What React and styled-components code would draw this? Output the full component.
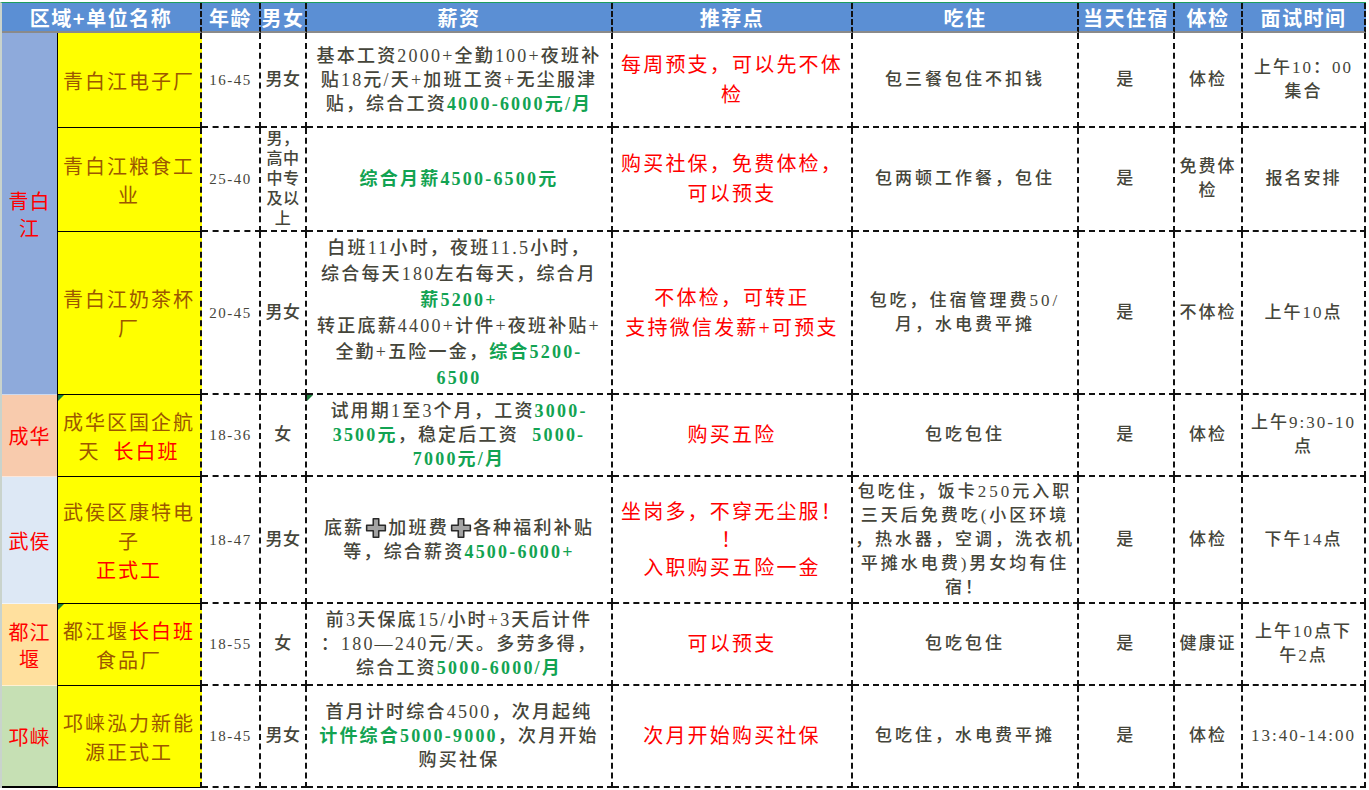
import React from 'react'
import styled, { createGlobalStyle } from 'styled-components'

const GlobalStyle = createGlobalStyle`
  html, body {
    margin: 0;
    padding: 0;
    background: #ffffff;
  }
  * {
    box-sizing: border-box;
  }
`

const serif = `"Liberation Serif", "Noto Sans CJK SC", serif`
const sans = `"Noto Sans CJK SC", "Noto Sans", sans-serif`
const ink = '#45453a'
const dash = '2px dashed #111'

const Sheet = styled.div`
  width: 1369px;
  height: 790px;
  padding-top: 2px;
  background: #ffffff;
  overflow: hidden;
`

const Table = styled.div`
  display: grid;
  grid-template-columns: 55px 145px 59px 46px 306px 240px 226px 96px 68px 123px;
  grid-template-rows: 30px 95px 104px 163px 82px 127px 82px 102px;
  width: 1366px;
  border-top: 1px solid #1f9d5c;
  border-left: 2px solid #c9d3cc;
  font-family: ${serif};
`

const HeadCell = styled.div`
  grid-column: span ${(p) => p.$span || 1};
  display: flex;
  align-items: center;
  justify-content: center;
  background: #5b8fd4;
  color: #ffffff;
  font-family: ${sans};
  font-weight: 700;
  font-size: 20px;
  letter-spacing: 1.5px;
  white-space: nowrap;
  border-bottom: 2px solid #8a8a8a;
  border-right: ${(p) => (p.$edge ? dash : '0')};
`

const RegionCell = styled.div`
  grid-row: span ${(p) => p.$span};
  display: flex;
  flex-direction: column;
  align-items: center;
  justify-content: center;
  background: ${(p) => p.$bg};
  color: #ff0000;
  font-family: ${sans};
  font-size: 20px;
  line-height: 27px;
  letter-spacing: 1px;
  border-bottom: ${(p) => (p.$last ? '2px solid #000' : '1px solid rgba(255,255,255,0.55)')};
`

const Flagged = styled.div`
  position: relative;

  &::before {
    content: '';
    display: ${(p) => (p.$flag ? 'block' : 'none')};
    position: absolute;
    top: 0;
    left: 0;
    width: 0;
    height: 0;
    border-top: 6px solid #1b7d3c;
    border-right: 6px solid transparent;
  }
`

const NameCell = styled(Flagged)`
  display: flex;
  flex-direction: column;
  align-items: center;
  justify-content: center;
  background: #ffff00;
  color: #9c5700;
  font-family: ${sans};
  font-size: 20px;
  line-height: 29px;
  letter-spacing: 2px;
  white-space: nowrap;
  border-left: 1px solid #000;
  border-bottom: 1.5px solid #000;
  border-right: ${dash};
`

const DataCell = styled(Flagged)`
  display: flex;
  flex-direction: column;
  align-items: center;
  justify-content: center;
  text-align: center;
  color: ${(p) => p.$color || ink};
  font-size: ${(p) => p.$size || 17}px;
  font-weight: ${(p) => p.$weight || 500};
  line-height: ${(p) => p.$lh || 24}px;
  letter-spacing: ${(p) => (p.$ls === undefined ? 2.5 : p.$ls)}px;
  white-space: nowrap;
  border-right: ${dash};
  border-bottom: ${dash};
`

const Line = styled.div`
  display: flex;
  align-items: center;
  justify-content: center;
  white-space: pre;
`

const Pay = styled.span`
  color: #12a352;
  font-weight: 700;
`

const Hot = styled.span`
  color: #ff0000;
`

const PlusIcon = () => (
  <svg width="22" height="22" viewBox="0 0 20 20" style={{ margin: '0 1px' }}>
    <path
      d="M7.5 1.5h5v6h6v5h-6v6h-5v-6h-6v-5h6z"
      fill="#a3a3a3"
      stroke="#2a2a2a"
      strokeWidth="1.4"
      strokeLinejoin="round"
    />
  </svg>
)

const groups = [
  {
    region: ['青白', '江'],
    bg: '#8eaadb',
    rows: [
      {
        name: ['青白江电子厂'],
        age: '16-45',
        gender: ['男女'],
        salary: [
          <>基本工资2000+全勤100+夜班补</>,
          <>贴18元/天+加班工资+无尘服津</>,
          <>贴，综合工资<Pay>4000-6000元/月</Pay></>,
        ],
        rec: ['每周预支，可以先不体', '检'],
        eat: ['包三餐包住不扣钱'],
        exam: ['体检'],
        time: ['上午10：00', '集合'],
      },
      {
        name: ['青白江粮食工', '业'],
        age: '25-40',
        gender: ['男，', '高中', '中专', '及以', '上'],
        genderSmall: true,
        salary: [<Pay>综合月薪4500-6500元</Pay>],
        rec: ['购买社保，免费体检，', '可以预支'],
        eat: ['包两顿工作餐，包住'],
        exam: ['免费体', '检'],
        time: ['报名安排'],
      },
      {
        name: ['青白江奶茶杯', '厂'],
        age: '20-45',
        gender: ['男女'],
        salary: [
          <>白班11小时，夜班11.5小时，</>,
          <>综合每天180左右每天，综合月</>,
          <Pay>薪5200+</Pay>,
          <>转正底薪4400+计件+夜班补贴+</>,
          <>全勤+五险一金，<Pay>综合5200-</Pay></>,
          <Pay>6500</Pay>,
        ],
        salaryLh: 26,
        rec: ['不体检，可转正', '支持微信发薪+可预支'],
        eat: ['包吃，住宿管理费50/', '月，水电费平摊'],
        exam: ['不体检'],
        time: ['上午10点'],
      },
    ],
  },
  {
    region: ['成华'],
    bg: '#f8cbad',
    rows: [
      {
        name: [<>成华区国企航</>, <>天{'\u00a0\u00a0'}<Hot>长白班</Hot></>],
        nameFlag: true,
        age: '18-36',
        gender: ['女'],
        salary: [
          <>试用期1至3个月，工资<Pay>3000-</Pay></>,
          <><Pay>3500元</Pay>，稳定后工资{'\u00a0\u00a0'}<Pay>5000-</Pay></>,
          <Pay>7000元/月</Pay>,
        ],
        salaryFlag: true,
        rec: ['购买五险'],
        eat: ['包吃包住'],
        exam: ['体检'],
        time: ['上午9:30-10', '点'],
      },
    ],
  },
  {
    region: ['武侯'],
    bg: '#dde8f5',
    rows: [
      {
        name: [<>武侯区康特电</>, <>子</>, <Hot>正式工</Hot>],
        age: '18-47',
        gender: ['男女'],
        salary: [
          <>底薪<PlusIcon />加班费<PlusIcon />各种福利补贴</>,
          <>等，综合薪资<Pay>4500-6000+</Pay></>,
        ],
        rec: ['坐岗多，不穿无尘服！', '！', '入职购买五险一金'],
        recLh: 28,
        eat: [
          '包吃住，饭卡250元入职',
          '三天后免费吃(小区环境',
          '，热水器，空调，洗衣机',
          '平摊水电费)男女均有住',
          '宿！',
        ],
        exam: ['体检'],
        time: ['下午14点'],
      },
    ],
  },
  {
    region: ['都江', '堰'],
    bg: '#ffe09e',
    rows: [
      {
        name: [<>都江堰<Hot>长白班</Hot></>, <>食品厂</>],
        nameFlag: true,
        age: '18-55',
        gender: ['女'],
        salary: [
          <>前3天保底15/小时+3天后计件</>,
          <>：180—240元/天。多劳多得，</>,
          <>综合工资<Pay>5000-6000/月</Pay></>,
        ],
        rec: ['可以预支'],
        eat: ['包吃包住'],
        exam: ['健康证'],
        time: ['上午10点下', '午2点'],
      },
    ],
  },
  {
    region: ['邛崃'],
    bg: '#c6e0b4',
    rows: [
      {
        name: ['邛崃泓力新能', '源正式工'],
        age: '18-45',
        gender: ['男女'],
        salary: [
          <>首月计时综合4500，次月起纯</>,
          <><Pay>计件综合5000-9000</Pay>，次月开始</>,
          <>购买社保</>,
        ],
        rec: ['次月开始购买社保'],
        eat: ['包吃住，水电费平摊'],
        exam: ['体检'],
        time: ['13:40-14:00'],
      },
    ],
  },
]

const headers = ['年龄', '男女', '薪资', '推荐点', '吃住', '当天住宿', '体检', '面试时间']

const lines = (list) => list.map((l, i) => <Line key={i}>{l}</Line>)

const JobRow = ({ row }) => (
  <>
    <NameCell $flag={row.nameFlag}>{lines(row.name)}</NameCell>
    <DataCell $size={15} $ls={1.5}>{row.age}</DataCell>
    <DataCell
      $size={row.genderSmall ? 16 : 17}
      $lh={row.genderSmall ? 20 : 24}
      $ls={0.5}
    >
      {lines(row.gender)}
    </DataCell>
    <DataCell $size={18} $lh={row.salaryLh || 24} $ls={2.2} $flag={row.salaryFlag}>
      {lines(row.salary)}
    </DataCell>
    <DataCell $size={20} $lh={row.recLh || 30} $ls={2.2} $weight={400} $color="#ff0000">
      {lines(row.rec)}
    </DataCell>
    <DataCell $size={17} $ls={3}>{lines(row.eat)}</DataCell>
    <DataCell $size={17}>是</DataCell>
    <DataCell $size={17} $ls={2}>{lines(row.exam)}</DataCell>
    <DataCell $size={17} $ls={2}>{lines(row.time)}</DataCell>
  </>
)

const App = () => (
  <>
    <GlobalStyle />
    <Sheet>
      <Table>
        <HeadCell $span={2} $edge>区域+单位名称</HeadCell>
        {headers.map((label) => (
          <HeadCell key={label} $edge>
            {label}
          </HeadCell>
        ))}
        {groups.map((g, gi) => (
          <React.Fragment key={gi}>
            <RegionCell $span={g.rows.length} $bg={g.bg} $last={gi === groups.length - 1}>
              {g.region.map((r) => (
                <span key={r}>{r}</span>
              ))}
            </RegionCell>
            {g.rows.map((row, ri) => (
              <JobRow key={ri} row={row} />
            ))}
          </React.Fragment>
        ))}
      </Table>
    </Sheet>
  </>
)

export default App
